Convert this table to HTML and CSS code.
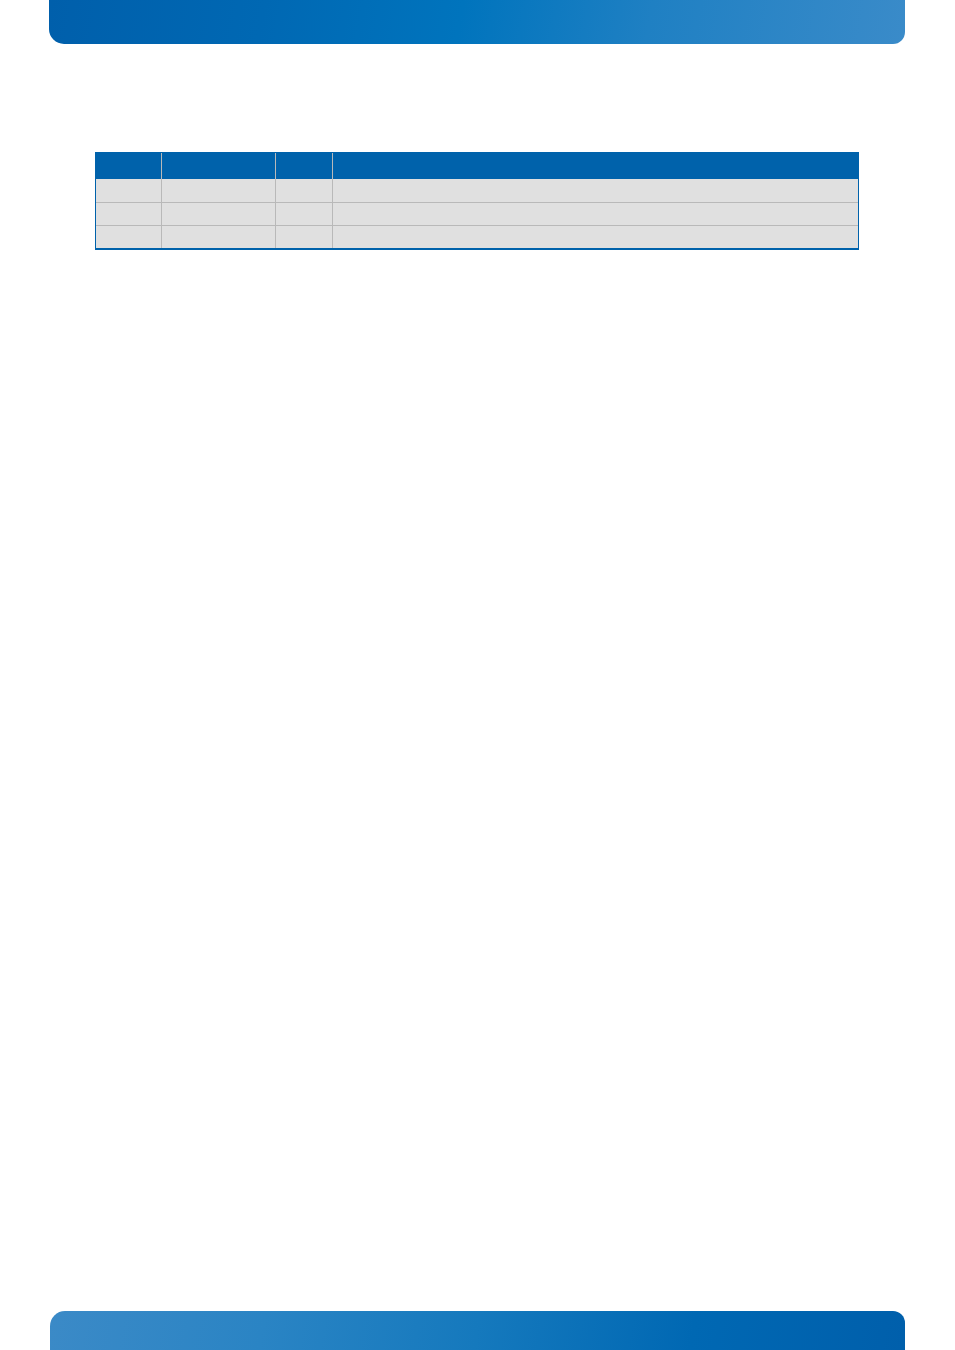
FILE: index.html
```html
<!DOCTYPE html>
<html lang="en">
<head>
<meta charset="utf-8">
<title>Page</title>
<link rel="stylesheet" href="styles.css">
</head>
<body>
<div class="page">
  <header class="top-bar"></header>
  <main class="content">
    <table class="spec-table">
      <colgroup>
        <col class="c1"><col class="c2"><col class="c3"><col class="c4">
      </colgroup>
      <thead>
        <tr><th></th><th></th><th></th><th></th></tr>
      </thead>
      <tbody>
        <tr class="r1"><td></td><td></td><td></td><td></td></tr>
        <tr><td></td><td></td><td></td><td></td></tr>
        <tr><td></td><td></td><td></td><td></td></tr>
      </tbody>
    </table>
  </main>
  <footer class="bottom-bar"></footer>
</div>
</body>
</html>
```
FILE: styles.css
```css
html, body {
  margin: 0;
  padding: 0;
  background: #ffffff;
  font-family: "Liberation Sans", Arial, sans-serif;
}

.page {
  display: flex;
  flex-direction: column;
  min-height: 1350px;
  width: 955px;
}

.top-bar {
  margin-left: 49px;
  width: 856px;
  height: 44px;
  border-radius: 0 0 12px 15px;
  background: linear-gradient(100deg, #005fab 0%, #0068b3 25%, #0074bd 48%, #1f80c3 70%, #3a8bc9 100%);
}

.content {
  padding: 108px 0 0 95px;
}

.spec-table {
  border-collapse: separate;
  border-spacing: 0;
  border: 1px solid #0062ab;
  border-bottom-width: 2px;
  table-layout: fixed;
  width: 764px;
}

.c1 { width: 65px; }
.c2 { width: 114px; }
.c3 { width: 57px; }
.c4 { width: auto; }

.spec-table th {
  background: #0062ab;
  height: 26px;
  padding: 0;
}

.spec-table th + th {
  border-left: 1px solid #b9b9b9;
}

.spec-table td {
  background: #e0e0e0;
  height: 22px;
  padding: 0;
  border-top: 1px solid #b9b9b9;
}

.spec-table tr.r1 td {
  border-top: none;
  height: 23px;
}

.spec-table td + td {
  border-left: 1px solid #b9b9b9;
}

.bottom-bar {
  margin-top: auto;
  margin-left: 50px;
  width: 855px;
  height: 39px;
  border-radius: 15px 12px 0 0;
  background: linear-gradient(100deg, #3b8ac7 0%, #2a84c4 25%, #1579bd 50%, #0068b3 75%, #005fab 100%);
}
```
